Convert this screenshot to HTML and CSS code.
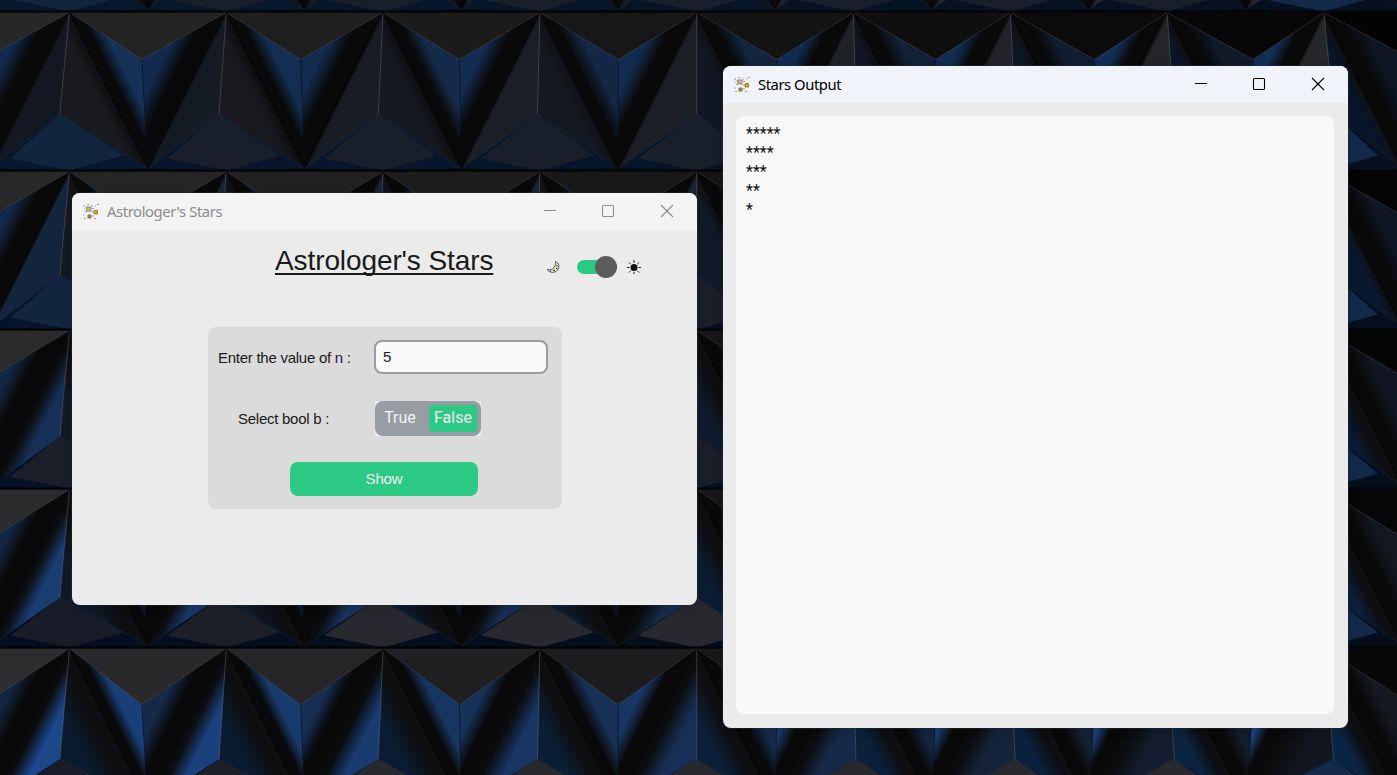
FILE: index.html
```html
<!DOCTYPE html>
<html lang="en">
<head>
<meta charset="utf-8">
<title>Astrologer's Stars</title>
<link rel="stylesheet" href="styles.css">
</head>
<body>
<svg width="0" height="0" class="defs">
  <symbol id="app-icon" viewBox="0 0 16 16">
    <path d="M3 3h5v4H4z" fill="#c9b47b" stroke="#8e887a"/>
    <path d="M11 6.500h3.500v3.500H11z" fill="#dca314" stroke="#a3813b"/>
    <path d="M5 11h3v3H5z" fill="#bc842d" stroke="#7d705c"/>
    <path d="M0 2h2M1 5h1M4 .5h2M8 2h2M12 2h1M14 .5h2M9 4.500h2M0 11h1.500M1 14.500h2M9 12h2M11 14.500h2M8 8h3M2 7.500h2" stroke="#a09f9d" fill="none"/>
  </symbol>
</svg>
<svg class="wallpaper" id="wallpaper" width="1397" height="775"></svg>

<section class="window window-main">
  <header class="titlebar">
    <svg class="app-icon"><use href="#app-icon"/></svg>
    <span class="title title-main">Astrologer's Stars</span>
    <svg class="controls" viewBox="0 0 130 14"><path d="M0 6.500h12" /><rect x="58.500" y="1.500" width="11" height="11" rx="1"/><path d="M117 1l12 12M129 1l-12 12"/></svg>
  </header>
  <div class="main-body">
    <div class="heading-row">
      <h1 class="heading">Astrologer's Stars</h1>
      <div class="theme">
        <svg class="moon" width="14" height="14" viewBox="0 0 14 14"><path d="M9.500 1.500C13 3 14 7 11.500 10S4.500 13.500 1 9.500c3 .8 5.500 0 7-2s2.200-4 1.500-6z" fill="#f5e7b8" stroke="#4a5a80"/><path d="M10 8.500h1.500M7 10.500h2M4 11h1M11 5v1.500" stroke="#24355c"/><path d="M11 6.500v1M8 9h1.500" stroke="#e0a72c"/></svg>
        <div class="switch"><span class="knob"></span></div>
        <svg class="sun" width="14" height="14" viewBox="0 0 14 14"><circle cx="7" cy="7.500" r="3.500" fill="#111"/><path d="M7 0v3M7 12v2.500M0 7.500h2.500M11.500 7.500h2.500M2 2.500l1.700 1.700M10.300 10.800L12 12.500M12 2.500l-1.700 1.700M2 12.500l1.700-1.700" stroke="#222" fill="none"/></svg>
      </div>
    </div>
    <div class="form">
      <div class="row row-n"><label class="label">Enter the value of n :</label><div class="entry">5</div></div>
      <div class="row row-b"><label class="label label-b">Select bool b :</label>
        <div class="segment-box"><div class="segments"><span class="seg seg-true">True</span><span class="seg seg-false">False</span></div></div></div>
      <div class="show">Show</div>
    </div>
  </div>
</section>

<section class="window window-output">
  <header class="titlebar titlebar-active">
    <svg class="app-icon"><use href="#app-icon"/></svg>
    <span class="title title-output">Stars Output</span>
    <svg class="controls" viewBox="0 0 130 14"><path d="M0 6.500h12" /><rect x="58.500" y="1.500" width="11" height="11" rx="1"/><path d="M117 1l12 12M129 1l-12 12"/></svg>
  </header>
  <pre class="output">*****
****
***
**
*</pre>
</section>
<script src="wallpaper.js"></script>
</body>
</html>
```
FILE: styles.css
```css
body { margin: 0; width: 1397px; height: 775px; overflow: hidden; position: relative; background: #090a0d; font-family: "Liberation Sans", sans-serif; color: #1a1a1a; }
.defs { position: absolute; }
.wallpaper { display: block; }
.window { position: absolute; width: 625px; border-radius: 8px; overflow: hidden; background: #ebebeb; display: flex; flex-direction: column; box-shadow: 0 0 0 1px rgba(40,44,50,.4), 0 3px 10px rgba(0,0,0,.15); }
.window-main { left: 72px; top: 193px; height: 412px; }
.window-output { left: 723px; top: 66px; height: 662px; }
.titlebar { flex: none; height: 37px; box-sizing: border-box; padding: 0 23px 0 11px; display: flex; align-items: center; background: #f3f3f3; color: #8c8c8c; }
.titlebar-active { background: #f0f3f9; color: #000; }
.app-icon { width: 16px; height: 16px; margin-right: 8px; }
.title { font-family: "Noto Sans", sans-serif; font-size: 14.800px; line-height: 37px; white-space: nowrap; }
.title-main { letter-spacing: -.4px; }
.title-output { letter-spacing: -.45px; }
.controls { width: 130px; height: 14px; margin: 0 0 2px auto; fill: none; stroke: currentColor; stroke-width: 1.100; }
.main-body { display: flex; flex-direction: column; }
.heading-row { display: flex; height: 97px; padding-left: 203px; }
.heading { margin: 13px 0 0; width: 271px; font-size: 28px; line-height: 36px; font-weight: 400; letter-spacing: -.1px; text-decoration: underline; text-decoration-thickness: 2px; text-underline-offset: 3px; text-decoration-skip-ink: none; white-space: nowrap; }
.theme { display: flex; align-items: center; height: 22px; margin-top: 26px; }
.switch { width: 40px; height: 14px; margin: 0 10px 0 17px; border-radius: 7px; background: #2cc985; display: flex; justify-content: flex-end; align-items: center; }
.knob { width: 22px; height: 22px; border-radius: 50%; background: #5c5c5c; flex: none; }
.form { margin-left: 136px; width: 354px; height: 182px; border-radius: 8px; background: #dbdbdb; box-sizing: border-box; padding: 13px 10px; display: flex; flex-direction: column; }
.row { display: flex; align-items: center; font-size: 15px; }
.row-n { height: 34px; }
.row-b { height: 36px; margin-top: 26px; }
.label { width: 156px; white-space: nowrap; letter-spacing: -.26px; }
.label-b { box-sizing: border-box; padding-left: 20px; width: 157px; }
.entry { box-sizing: border-box; width: 174px; height: 34px; border: 2px solid #979da2; border-radius: 8px; background: #f9f9fa; padding-left: 7px; line-height: 30px; }
.segment-box { width: 106px; height: 35px; background: #ebebeb; }
.segments { box-sizing: border-box; height: 35px; border-radius: 8px; background: #979da2; padding: 4px; display: flex; font: 16px/26px Roboto, sans-serif; color: #f2f4f4; }
.seg { height: 27px; text-align: center; }
.seg-true { width: 42px; margin-right: 8px; }
.seg-false { width: 48px; border-radius: 4px; background: #2cc985; }
.show { width: 188px; height: 34px; margin: 26px 0 0 72px; border-radius: 8px; background: #2cc985; color: #f2f4f4; font-size: 15px; letter-spacing: -.15px; line-height: 34px; text-align: center; }
.output { margin: 13px 14px 14px 13px; flex: 1; border-radius: 8px; background: #f9f9fa; padding: 8px 10px; box-sizing: border-box; font: 16px/19px Roboto, sans-serif; color: #111; }
```
FILE: wallpaper.js
```js
(function () {
  const svg = document.getElementById('wallpaper');
  // Corner colours per facet: top-left, top-right, bottom-left, bottom-right.
  const palette = {
    top: [[39,39,39],[3,3,3],[45,45,48],[8,8,10]],
    armL: [[22,52,94],[14,22,36],[25,69,132],[20,24,32]],
    armR: [[18,42,76],[18,46,84],[20,37,64],[29,78,146]],
    pyrR: [[26,26,28],[8,20,40],[10,25,44],[10,38,72]],
    pyrL: [[17,23,33],[40,40,42],[29,78,154],[16,18,24]],
    base: [[17,35,60],[22,34,54],[32,34,40],[26,31,42]],
    sliver: [[7,24,46],[6,16,32],[2,10,26],[4,12,24]]
  };
  const clamp = v => Math.max(0, Math.min(1, v));
  function tone(name, x, y) {
    const u = clamp(x / 1397), v = clamp(y / 700), p = palette[name];
    return 'rgb(' + [0, 1, 2].map(i => Math.round((p[0][i]*(1-u)+p[1][i]*u)*(1-v)+(p[2][i]*(1-u)+p[3][i]*u)*v)).join(',') + ')';
  }
  // The lit base facets turn from blue to slate between the first two columns and after the first row.
  function baseTone(r, c) {
    if (c < 1 && r < 2) return '#11253f';
    if (c > 7) return '#12294a';
    if (r < 1) return '#181e2a';
    return r < 3 ? '#191e29' : (c < 1 ? '#171c28' : c < 2 ? '#1c1f28' : '#28292e');
  }
  let defs = '', shapes = '', n = 0;
  const pts = list => list.map(p => p.join(',')).join(' ');
  // Shade a triangle from its dark edge a-b toward vertex c.
  function shaded(a, b, c, color, start, end, dark) {
    const dx = b[0]-a[0], dy = b[1]-a[1];
    const t = ((c[0]-a[0])*dx + (c[1]-a[1])*dy) / (dx*dx + dy*dy);
    const id = 'g' + n++;
    defs += `<linearGradient id="${id}" gradientUnits="userSpaceOnUse" x1="${a[0]+t*dx}" y1="${a[1]+t*dy}" x2="${c[0]}" y2="${c[1]}"><stop offset="${start}" stop-color="${dark}"/><stop offset="${end}" stop-color="${color}"/></linearGradient>`;
    shapes += `<polygon points="${pts([a,b,c])}" fill="url(#${id})"/>`;
  }
  const flat = (list, color) => { shapes += `<polygon points="${pts(list)}" fill="${color}"/>`; };
  const line = (list, color, w) => { shapes += `<polyline points="${pts(list)}" fill="none" stroke="${color}" stroke-width="${w}"/>`; };
  for (let r = -1; r < 5; r++) {
    const y = 12.5 + 159 * r, drop = 47 + 2.3 * r, low = 101.5 + 2.3 * r;
    for (let c = -1; c < 10; c++) {
      const ax = 69.5 + 156.8 * c, nx = ax + 156.8, mid = ax + 78.4;
      const A = [ax, y], N = [nx, y], B = [mid, y + 156], P = [mid - 156.8, y + 156];
      const Y = [mid + (mid - 630) * .0125, y + drop];
      const L = [ax + (ax - 697) * .0155, y + low];
      flat([A, N, Y], tone('top', mid, y));
      shaded(A, B, Y, tone('armL', mid, y), .22, .52, '#090909');
      shaded(N, B, Y, tone('armR', mid, y), .34, .66, '#090909');
      const lower = r > 1;
      shaded(A, B, L, tone('pyrR', ax, y), lower ? .2 : 0, lower ? .6 : .25, '#0e0e10');
      shaded(A, P, L, tone('pyrL', ax, y), lower ? .12 : 0, lower ? .5 : .06, '#0b0c0e');
      flat([L, P, [ax, y + 158], B], tone('sliver', ax, y));
      flat([L, [ax - 59, y + 146], [ax, y + 158], [ax + 54, y + 143]], baseTone(r, c));
      line([A, Y, N], 'rgba(130,140,150,.3)', .8);
      line([A, L], 'rgba(130,135,140,.4)', .9);
      line([Y, B], 'rgba(5,12,24,.65)', .8);
      line([A, B, N], '#060607', 1.2);
      line([P, L, B], 'rgba(55,95,145,.25)', .8);
      line([[ax, y - 1], [nx, y - 1]], '#030406', 1.8);
    }
  }
  svg.innerHTML = '<defs>' + defs + '</defs>' + shapes;
})();
```
